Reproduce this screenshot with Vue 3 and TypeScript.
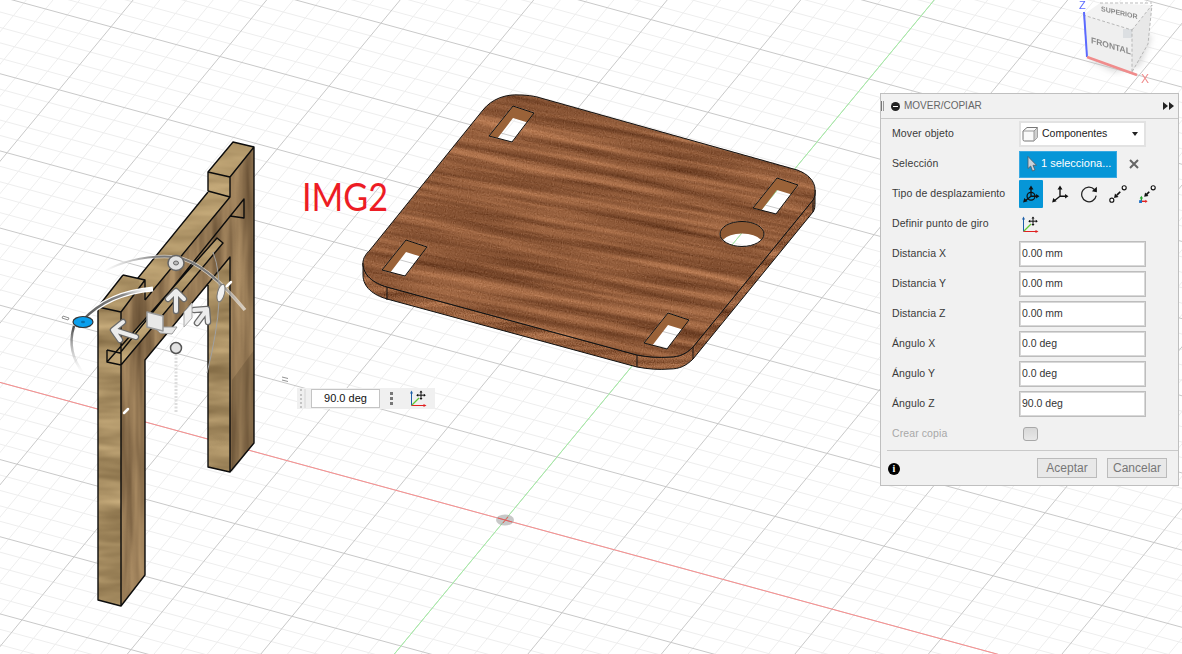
<template>
  <div class="viewport">
    <svg class="canvas" width="1182" height="654" viewBox="0 0 1182 654">
      <defs>
        <filter id="wood" x="-5%" y="-5%" width="110%" height="110%" color-interpolation-filters="sRGB">
          <feTurbulence type="fractalNoise" baseFrequency="0.005 0.12" numOctaves="5" seed="11" result="grain" />
          <feColorMatrix in="grain" type="matrix" values="0.45 0 0 0 0.34  0.36 0 0 0 0.175  0.28 0 0 0 0.085  0 0 0 0 1" result="tone" />
          <feTurbulence type="fractalNoise" baseFrequency="0.9" numOctaves="1" seed="3" result="fine" />
          <feColorMatrix in="fine" type="matrix" values="1 0 0 0 0  1 0 0 0 0  1 0 0 0 0  0 0 0 0 1" result="speck" />
          <feComposite in="tone" in2="speck" operator="arithmetic" k1="0" k2="1" k3="0.3" k4="-0.15" result="mixed" />
          <feComposite in="mixed" in2="SourceGraphic" operator="in" />
        </filter>
        <filter id="oakH" x="-5%" y="-5%" width="110%" height="110%" color-interpolation-filters="sRGB">
          <feTurbulence type="fractalNoise" baseFrequency="0.012 0.06" numOctaves="3" seed="5" />
          <feColorMatrix type="matrix" values="0.4 0 0 0 0.45  0.38 0 0 0 0.36  0.32 0 0 0 0.22  0 0 0 0 1" result="tone" />
          <feComposite in="tone" in2="SourceGraphic" operator="in" />
        </filter>
        <filter id="oakV" x="-5%" y="-5%" width="110%" height="110%" color-interpolation-filters="sRGB">
          <feTurbulence type="fractalNoise" baseFrequency="0.09 0.008" numOctaves="3" seed="9" />
          <feColorMatrix type="matrix" values="0.4 0 0 0 0.37  0.36 0 0 0 0.28  0.28 0 0 0 0.18  0 0 0 0 1" result="tone" />
          <feComposite in="tone" in2="SourceGraphic" operator="in" />
        </filter>
        <filter id="soft"><feGaussianBlur stdDeviation="0.55" /></filter>
        <filter id="softer"><feGaussianBlur stdDeviation="3" /></filter>
        <linearGradient id="arcBlue" x1="0" y1="1" x2="1" y2="0">
          <stop offset="0" stop-color="#555" />
          <stop offset="0.7" stop-color="#888" />
          <stop offset="1" stop-color="#fff" stop-opacity="0.2" />
        </linearGradient>
        <linearGradient id="arcTop" x1="0" y1="0" x2="1" y2="0">
          <stop offset="0" stop-color="#aaa" stop-opacity="0" />
          <stop offset="0.4" stop-color="#777" />
          <stop offset="0.8" stop-color="#777" />
          <stop offset="1" stop-color="#aaa" stop-opacity="0" />
        </linearGradient>
        <linearGradient id="arcLow" x1="0" y1="0" x2="0" y2="1">
          <stop offset="0" stop-color="#444" />
          <stop offset="1" stop-color="#ccc" stop-opacity="0" />
        </linearGradient>
        <symbol id="axisMove" viewBox="0 0 17 17">
          <path d="M1.500 15.500V3" stroke="#1c5fa8" stroke-width="1" fill="none" />
          <path d="M1.500 0.500L0 3.500H3z" fill="#1c5fa8" />
          <path d="M1.500 15.500H14" stroke="#e02020" stroke-width="1" fill="none" />
          <path d="M16.500 15.500L13.500 14V17z" fill="#e02020" />
          <path d="M2 15L9 8" stroke="#5fc832" stroke-width="1.300" fill="none" />
          <path d="M11 1.500V9M7.200 5.200H14.800" stroke="#111" stroke-width="1" fill="none" />
          <path d="M11 0.500L9.500 2.500H12.500zM11 10L9.500 8H12.500zM6.200 5.200L8.200 3.700V6.700zM15.800 5.200L13.800 3.700V6.700z" fill="#111" />
        </symbol>
        <symbol id="moveAll" viewBox="0 0 16 16">
          <circle cx="8" cy="10" r="3.500" fill="none" stroke="#111" stroke-width="1.100" />
          <path d="M8 10V3M8 10H13M8 10L3.500 13.500" stroke="#111" stroke-width="1.200" fill="none" />
          <path d="M8 0.500L5.800 4H10.200zM15.500 10L12.500 8V12zM1 15.500L2 11.500L5 14.500z" fill="#111" />
        </symbol>
      </defs>

      <!-- ground grid -->
      <path :d="minorGrid" class="grid-minor" />
      <path :d="majorGrid" class="grid-major" />
      <path :d="redAxis" class="axis-red" />
      <path :d="greenAxis" class="axis-green" />
      <ellipse cx="505" cy="520" rx="9" ry="5.500" fill="#9a9a9a" fill-opacity="0.55" />
      <path d="M498 518L512 522M503 523L508 517" stroke="#e85a5a" stroke-width="1" />

      <!-- table top -->
      <path :d="boardSide" filter="url(#wood)" />
      <path :d="boardSide" class="edge-thin" />
      <path d="M387 287V300M637 355V367M693 347V359M813 200V212" class="edge-thin" />
      <g filter="url(#wood)" transform="rotate(11 590 230)">
        <path :d="boardTop" fill-rule="evenodd" transform="rotate(-11 590 230)" />
      </g>
      <polygon v-for="slot in slotWalls" :key="slot" :points="slot" fill="#9a6238" />
      <path d="M722.700 240A22 12.500 0 1 1 761.300 240A22 12.500 0 0 0 722.700 240Z" fill="#8f5a34" />
      <path :d="boardTop" fill="none" fill-rule="evenodd" class="edge-thin" />

      <!-- stand -->
      <polygon v-for="face in standFaces" :key="face.points" :points="face.points" :filter="`url(#${face.grain})`" />
      <polygon points="138,278 208,192 230,197 145,300" fill="#d4b684" fill-opacity="0.25" />
      <polygon points="208,172 233,142 254,147 230,177" fill="#d4b684" fill-opacity="0.25" />
      <polygon points="123,275 145,280 121,312 98,307" fill="#d4b684" fill-opacity="0.25" />
      <polygon points="107,362 121,365 223,243 217,238" fill="#d4b684" fill-opacity="0.25" />
      <polygon points="232,380 254,350 254,443 232,472" fill="#3c2c1a" fill-opacity="0.2" />
      <path d="M208 191V172L233 142L254 147V443L230 472L208 467V285
               M208 172L230 177V197L208 191M230 177L254 147
               M208 192L138 278M230 197L145 300
               M123 275L145 280V300M123 275L98 307V600L121 606L145 575V360L230 257V472
               M98 307L121 312L145 280M121 312V606
               M107 350L120 353L244 199V218L230 216
               M107 350V362L121 365L223 243L217 238L107 362" class="edge-thick" />

      <!-- rotate / move manipulator -->
      <g fill="none">
        <path d="M83 320Q108 293 153 289" stroke="#fff" stroke-width="5" />
        <path d="M83 320Q108 293 153 289" stroke="url(#arcBlue)" stroke-width="2.500" />
        <path d="M103 272Q135 254 176 257Q205 262 245 310" stroke="#fff" stroke-opacity="0.6" stroke-width="3.500" />
        <path d="M103 272Q135 254 176 257Q205 262 245 310" stroke="url(#arcTop)" stroke-width="2" />
        <path d="M74 326Q66 352 84 374" stroke="url(#arcLow)" stroke-width="2.500" />
        <path d="M213 252Q228 290 207 373" stroke="#a0a0a0" stroke-width="1" />
        <path d="M176 354V413" stroke="#ddd" stroke-width="3" stroke-dasharray="2 1.500" />
      </g>
      <ellipse cx="176" cy="263" rx="8" ry="7.500" fill="#e3e3e3" stroke="#666" stroke-width="1.500" />
      <ellipse cx="176" cy="263" rx="2.500" ry="2" fill="#bbb" stroke="#666" />
      <ellipse cx="221" cy="293" rx="3.500" ry="9" transform="rotate(14 221 293)" fill="#f2f2f2" stroke="#777" />
      <ellipse cx="83" cy="322" rx="10" ry="5.500" fill="#0a9fec" stroke="#333" stroke-width="1.200" />
      <ellipse cx="83" cy="322" rx="2" ry="1.200" fill="#0a6ea6" />
      <g fill="none" stroke-linecap="round" stroke-linejoin="round">
        <path v-for="arrow in gizmoArrows" :key="arrow" :d="arrow" stroke="#6a6a6a" stroke-width="6.500" />
        <path v-for="arrow in gizmoArrows" :key="arrow" :d="arrow" stroke="#ececec" stroke-width="4" />
      </g>
      <polygon points="154,327 177,327 172,334 160,333" fill="#e6e6e6" stroke="#999" stroke-linejoin="round" />
      <polygon points="147,312 163,316 163,331 147,327" fill="#e8e8e8" stroke="#999" stroke-width="1.500" stroke-linejoin="round" />
      <polygon points="184,312 192,303 192,318 184,327" fill="#eee" stroke="#aaa" stroke-linejoin="round" />
      <circle cx="176" cy="348" r="5.500" fill="#e2e2e2" stroke="#555" stroke-width="1.500" />
      <path d="M124 413L128 409M227 286L231 282" stroke="#fff" stroke-width="2.500" stroke-linecap="round" />
      <path d="M63 316l6 2M63 316l-1 2l6 2l1-2M282 377l6 1.500M282 380l6 1.500" stroke="#777" stroke-width="0.800" fill="none" />

      <text x="302" y="211" textLength="86" lengthAdjust="spacingAndGlyphs" class="note">IMG2</text>

      <!-- view cube -->
      <polygon points="1102,23 1152,36 1140,66 1114,72 1090,60" fill="#bbb" fill-opacity="0.55" filter="url(#softer)" />
      <g filter="url(#soft)">
        <polygon points="1083,15 1100,3 1152,5 1132,30" fill="#f3f3f3" />
        <polygon points="1083,15 1132,30 1132,72 1087,57" fill="#efefef" />
        <polygon points="1132,30 1152,5 1148,44 1132,72" fill="#e8e8e8" />
        <rect x="1123" y="29" width="9" height="9" fill="#dcdfe2" />
        <path d="M1083 15L1132 30V72M1132 30L1152 5L1148 44L1132 72M1100 3H1152" fill="none" stroke="#aaa" stroke-width="0.800" stroke-dasharray="3 2" />
        <path d="M1084 12L1087 57" stroke="#5c6bff" stroke-width="2" />
        <path d="M1087 57L1137 75" stroke="#f08c8c" stroke-width="2.400" />
        <text class="cube-word" transform="matrix(1 0.29 0 1 1091 43)">FRONTAL</text>
        <text class="cube-word cube-small" transform="matrix(1 0.22 0 1 1101 11)">SUPERIOR</text>
        <text x="1079" y="9" class="cube-z">Z</text>
        <text x="1141" y="83" class="cube-x">X</text>
      </g>
    </svg>

    <!-- value box next to the manipulator -->
    <div class="float-bar">
      <span class="float-grip"></span>
      <span class="float-input">90.0 deg</span>
      <span class="float-dots"><i></i><i></i><i></i></span>
      <svg class="float-icon" width="17" height="17"><use href="#axisMove" /></svg>
    </div>

    <section class="panel">
      <header class="panel-head">
        <span class="head-grip"></span>
        <span class="head-minus"></span>
        <span class="head-title">MOVER/COPIAR</span>
        <svg class="head-more" width="11" height="8" viewBox="0 0 11 8"><path d="M0 0L5 4L0 8zM6 0L11 4L6 8z" fill="#222" /></svg>
      </header>

      <div class="panel-body">
        <div class="row">
          <label>Mover objeto</label>
          <div class="select">
            <svg width="17" height="16" viewBox="0 0 17 16">
              <path d="M1 5L5 1.500H15.500V11.500L12 15H2.500Q1 15 1 13.500z" fill="#fafafa" stroke="#777" stroke-linejoin="round" />
              <path d="M12 5L15.500 1.500V11.500L12 15z" fill="#d0d0d0" />
              <path d="M12 15V5H1M12 5L15.500 1.500" fill="none" stroke="#999" />
            </svg>
            <span>Componentes</span>
            <i class="caret"></i>
          </div>
        </div>

        <div class="row">
          <label>Selección</label>
          <div class="pick">
            <svg width="10" height="16" viewBox="0 0 10 16"><path d="M1 0.500V12.500L3.700 10L5.500 15L8 14L6 9.300H9.500z" fill="#c8d2da" stroke="#4b5b66" stroke-width="0.800" /></svg>
            <span>1 selecciona...</span>
          </div>
          <svg class="clear" width="10" height="10" viewBox="0 0 10 10"><path d="M1 1L9 9M9 1L1 9" stroke="#666" stroke-width="2" /></svg>
        </div>

        <div class="row">
          <label>Tipo de desplazamiento</label>
          <div class="modes">
            <span class="mode active">
              <svg width="18" height="18"><use href="#moveAll" /></svg>
            </span>
            <span class="mode">
              <svg width="18" height="18" viewBox="0 0 16 16"><path d="M8 10V3M8 10H13M8 10L3.500 13.500" stroke="#111" stroke-width="1.200" fill="none" /><path d="M8 0.500L5.800 4H10.200zM15.500 10L12.500 8V12zM1 15.500L2 11.500L5 14.500z" fill="#111" /></svg>
            </span>
            <span class="mode">
              <svg width="18" height="18" viewBox="0 0 16 16"><path d="M12.800 4A6.500 6.500 0 1 0 14.400 9.500" stroke="#222" stroke-width="1.100" fill="none" /><path d="M15 1.500L15 6.500L10.500 5.500z" fill="#111" /></svg>
            </span>
            <span class="mode">
              <svg width="18" height="18" viewBox="0 0 16 16"><circle cx="2.500" cy="13.500" r="1.800" fill="#fff" stroke="#111" /><circle cx="13.500" cy="2.500" r="1.800" fill="#fff" stroke="#111" /><path d="M10 6L7 9" stroke="#111" stroke-width="1.500" /><path d="M4.500 11.500L5.300 7.500L8.500 10.700z" fill="#111" /></svg>
            </span>
            <span class="mode">
              <svg width="18" height="18" viewBox="0 0 16 16"><circle cx="13.500" cy="2.500" r="1.800" fill="#fff" stroke="#111" /><path d="M10 6L7.500 8.500" stroke="#111" stroke-width="1.500" /><path d="M5.500 10.500L6.300 6.700L9.300 9.700z" fill="#111" /><path d="M3 15V11" stroke="#22a52c" stroke-width="1.200" /><path d="M3 9.500L1.500 12H4.500z" fill="#22a52c" /><path d="M3 14.500H7" stroke="#e02020" stroke-width="1.200" /><path d="M8.500 14.500L6.500 13V16z" fill="#e02020" /><rect x="1" y="13.500" width="2.500" height="2.500" fill="#1c6fc4" /></svg>
            </span>
          </div>
        </div>

        <div class="row">
          <label>Definir punto de giro</label>
          <svg class="pivot" width="17" height="17"><use href="#axisMove" /></svg>
        </div>

        <div v-for="field in fields" :key="field.label" class="row">
          <label>{{ field.label }}</label>
          <div class="input">{{ field.value }}</div>
        </div>

        <div class="row">
          <label class="off">Crear copia</label>
          <span class="check"></span>
        </div>
      </div>

      <footer class="panel-foot">
        <span class="info">i</span>
        <button class="btn btn-ok" type="button">Aceptar</button>
        <button class="btn btn-cancel" type="button">Cancelar</button>
      </footer>
    </section>
  </div>
</template>

<script setup lang="ts">
// ground plane -> screen, the view is practically orthographic so one major
// cell is the same two vectors everywhere. Origin is the marker at 505,520
const ORIGIN = { x: 505, y: 520 }
const project = (u: number, v: number) => ({
  x: ORIGIN.x + 109 * u + 52 * v,
  y: ORIGIN.y + 29.7 * u - 63 * v
})

const segment = (u1: number, v1: number, u2: number, v2: number) => {
  const a = project(u1, v1)
  const b = project(u2, v2)
  return `M${a.x.toFixed(1)} ${a.y.toFixed(1)}L${b.x.toFixed(1)} ${b.y.toFixed(1)}`
}

const U_MIN = -10
const U_MAX = 9
const V_MIN = -5
const V_MAX = 12

const buildGrid = (major: boolean) => {
  let d = ''
  for (let i = U_MIN * 5; i <= U_MAX * 5; i++) {
    if ((i % 5 === 0) === major) d += segment(i / 5, V_MIN, i / 5, V_MAX)
  }
  for (let j = V_MIN * 5; j <= V_MAX * 5; j++) {
    if ((j % 5 === 0) === major) d += segment(U_MIN, j / 5, U_MAX, j / 5)
  }
  return d
}

const minorGrid = buildGrid(false)
const majorGrid = buildGrid(true)
const redAxis = segment(U_MIN, 0, U_MAX, 0)
const greenAxis = segment(0, V_MIN, 0, V_MAX)

// rectangular slots of the top, all the same shape
const slots = [
  { x: 513, y: 106 },
  { x: 777, y: 178 },
  { x: 406, y: 240 },
  { x: 668, y: 313 }
]

const shifted = (p: { x: number; y: number }, offsets: number[][]) =>
  offsets.map(([dx, dy]) => `${p.x + dx},${p.y + dy}`)

const slotHoles = slots
  .map((s) => `M${shifted(s, [[0, 0], [21, 7], [-1, 36], [-24, 30]]).join('L')}Z`)
  .join('')

const slotWalls = slots.map((s) =>
  shifted(s, [[0, 0], [21, 7], [14.6, 16.6], [0, 12], [-15.3, 32], [-24, 30]]).join(' ')
)

const boardOutline =
  'M370 250L483 110C492 99 505 94 520 95C527 95 532 96 537 97L797 170C808 174 815 181 815 190C815 194 815 197 813 200L693 347C686 354 679 357 670 357C658 358 648 357 637 355L387 287C373 283 363 275 363 263C363 258 366 254 370 250Z'
const hole = 'M720 234a22 12.5 0 1 0 44 0a22 12.5 0 1 0 -44 0Z'
const boardTop = boardOutline + slotHoles + hole

const boardSide =
  'M363 263V275C363 287 373 295 387 299L637 367C648 369 658 370 670 369C679 369 686 366 693 359L813 212C815 209 815 206 815 202V190C815 194 815 197 813 200L693 347C686 354 679 357 670 357C658 358 648 357 637 355L387 287C373 283 363 275 363 263Z'

const standFaces = [
  { points: '230,177 254,147 254,443 230,472', grain: 'oakV' },
  { points: '208,172 230,177 230,472 208,467', grain: 'oakH' },
  { points: '208,172 233,142 254,147 230,177', grain: 'oakH' },
  { points: '145,300 230,197 244,199 244,218 230,257 145,360', grain: 'oakV' },
  { points: '138,278 208,192 230,197 145,300', grain: 'oakH' },
  { points: '121,312 145,280 145,575 121,606', grain: 'oakV' },
  { points: '98,307 121,312 121,606 98,600', grain: 'oakH' },
  { points: '123,275 145,280 121,312 98,307', grain: 'oakH' },
  { points: '107,362 121,365 223,243 217,238', grain: 'oakH' }
]

const gizmoArrows = [
  'M176 311V292M168 299L176 291L184 299',
  'M136 337L114 330M123 322L113 330L120 340',
  'M197 323L206 311M194 310L207 309L208 322'
]

const fields = [
  { label: 'Distancia X', value: '0.00 mm' },
  { label: 'Distancia Y', value: '0.00 mm' },
  { label: 'Distancia Z', value: '0.00 mm' },
  { label: 'Ángulo X', value: '0.0 deg' },
  { label: 'Ángulo Y', value: '0.0 deg' },
  { label: 'Ángulo Z', value: '90.0 deg' }
]
</script>

<style scoped>
.viewport {
  position: relative;
  width: 1182px;
  height: 654px;
  overflow: hidden;
  background: #fff;
  font-family: "Liberation Sans", Arial, sans-serif;
  font-size: 10.5px;
}

.canvas {
  display: block;
}

.grid-minor {
  fill: none;
  stroke: #eeeeee;
  stroke-width: 1;
}

.grid-major {
  fill: none;
  stroke: #c9c9c9;
  stroke-width: 1;
}

.axis-red {
  fill: none;
  stroke: #fb8f8f;
  stroke-width: 1;
}

.axis-green {
  fill: none;
  stroke: #a2f0a2;
  stroke-width: 1;
}

.edge-thin {
  fill: none;
  stroke: #111;
  stroke-width: 1;
}

.edge-thick {
  fill: none;
  stroke: #0c0c0c;
  stroke-width: 1.4;
  stroke-linejoin: round;
}

.note {
  font-family: Lato, "Open Sans", sans-serif;
  font-size: 38px;
  fill: #ed1c24;
}

.cube-word {
  font-family: "Liberation Sans", sans-serif;
  font-size: 8.5px;
  font-weight: 700;
  fill: #8a8a8a;
}

.cube-small {
  font-size: 7px;
}

.cube-z {
  font-family: "Liberation Sans", sans-serif;
  font-size: 11px;
  fill: #5c6bff;
}

.cube-x {
  font-family: "Liberation Sans", sans-serif;
  font-size: 12px;
  fill: #f08c8c;
}

/* value box beside the gizmo */
.float-bar {
  position: absolute;
  left: 297px;
  top: 388px;
  width: 138px;
  height: 21px;
  display: flex;
  align-items: center;
  background: #f0f0f0;
}

.float-grip {
  width: 6px;
  height: 19px;
  margin: 0 5px 0 3px;
  border-left: 2px dotted #c4c4c4;
  border-right: 2px solid #e2e2e2;
  box-sizing: border-box;
}

.float-input {
  width: 69px;
  height: 19px;
  box-sizing: border-box;
  border: 1px solid #c4c4c4;
  background: #fff;
  text-align: center;
  line-height: 16px;
  font-size: 11px;
  color: #111;
}

.float-dots {
  display: flex;
  flex-direction: column;
  gap: 2px;
  margin-left: 10px;
}

.float-dots i {
  width: 3px;
  height: 3px;
  background: #777;
}

.float-icon {
  margin-left: 17px;
}

/* command dialog */
.panel {
  position: absolute;
  left: 880px;
  top: 93px;
  width: 299px;
  height: 393px;
  box-sizing: border-box;
  border: 1px solid #bfbfbf;
  background: #f1f1f1;
  color: #3a3a3a;
}

.panel-head {
  position: relative;
  display: flex;
  align-items: center;
  height: 24px;
  border-bottom: 1px solid #c9c9c9;
}

.head-grip {
  width: 3px;
  height: 10px;
  border-left: 1px solid #777;
  border-right: 1px solid #999;
  box-sizing: border-box;
}

.head-minus {
  position: relative;
  width: 9px;
  height: 9px;
  margin-left: 7px;
  border-radius: 50%;
  background: #222;
}

.head-minus::after {
  content: "";
  position: absolute;
  left: 2px;
  top: 4px;
  width: 5px;
  height: 1px;
  background: #fff;
}

.head-title {
  margin-left: 4px;
  padding-bottom: 2px;
  font-size: 10px;
  color: #666;
}

.head-more {
  margin-left: auto;
  margin-right: 4px;
}

.panel-body {
  padding-left: 11px;
}

.row {
  display: flex;
  align-items: center;
  height: 30px;
}

.row label {
  width: 127px;
  flex: none;
  padding-bottom: 2px;
  letter-spacing: 0.1px;
}

.row label.off {
  color: #a8a8a8;
}

.select {
  display: flex;
  align-items: center;
  width: 127px;
  height: 26px;
  box-sizing: border-box;
  padding: 0 6px 0 1px;
  border: 2px solid #e2e2e2;
  background: #fff;
  color: #222;
}

.select span {
  margin-left: 3px;
  padding-bottom: 2px;
}

.caret {
  margin-left: auto;
  width: 0;
  height: 0;
  border-left: 3px solid transparent;
  border-right: 3px solid transparent;
  border-top: 4px solid #222;
}

.pick {
  display: flex;
  align-items: center;
  gap: 4px;
  width: 98px;
  height: 27px;
  box-sizing: border-box;
  padding-left: 7px;
  border: 1px solid #38a9e2;
  background: #0696d7;
  color: #fff;
  font-size: 11px;
  white-space: nowrap;
}

.pick span {
  padding-bottom: 2px;
}

.clear {
  margin-left: 12px;
}

.modes {
  display: flex;
  align-items: center;
  gap: 5.5px;
}

.mode {
  display: flex;
  align-items: center;
  justify-content: center;
  width: 23.5px;
  height: 28px;
}

.mode.active {
  background: #0696d7;
  border-radius: 1px;
}

.pivot {
  margin-left: 3px;
}

.input {
  width: 127px;
  height: 26px;
  box-sizing: border-box;
  padding-left: 2px;
  border: 1px solid #bdbdbd;
  outline: 1px solid #d8d8d8;
  outline-offset: -2px;
  background: #fff;
  line-height: 22px;
  color: #333;
}

.check {
  width: 13px;
  height: 12px;
  margin-left: 4px;
  border: 1px solid #a8a8a8;
  border-radius: 3px;
  background: linear-gradient(#d8d8d8, #e8e8e8);
}

.panel-foot {
  position: relative;
  display: flex;
  align-items: center;
  height: 36px;
  margin-left: 6px;
  margin-top: 1px;
  border-top: 1px solid #c9c9c9;
}

.info {
  width: 12px;
  height: 12px;
  margin-left: 1px;
  border-radius: 50%;
  background: #000;
  color: #fff;
  font: 700 10px/12px "Liberation Serif", serif;
  text-align: center;
}

.btn {
  height: 20px;
  margin-bottom: 2px;
  padding: 0;
  border: 1px solid #bbb;
  background: #e8e8e8;
  color: #777;
  font: 12px "Liberation Sans", Arial, sans-serif;
}

.btn-ok {
  width: 60px;
  margin-left: 137px;
}

.btn-cancel {
  width: 60px;
  margin-left: 10px;
}
</style>
